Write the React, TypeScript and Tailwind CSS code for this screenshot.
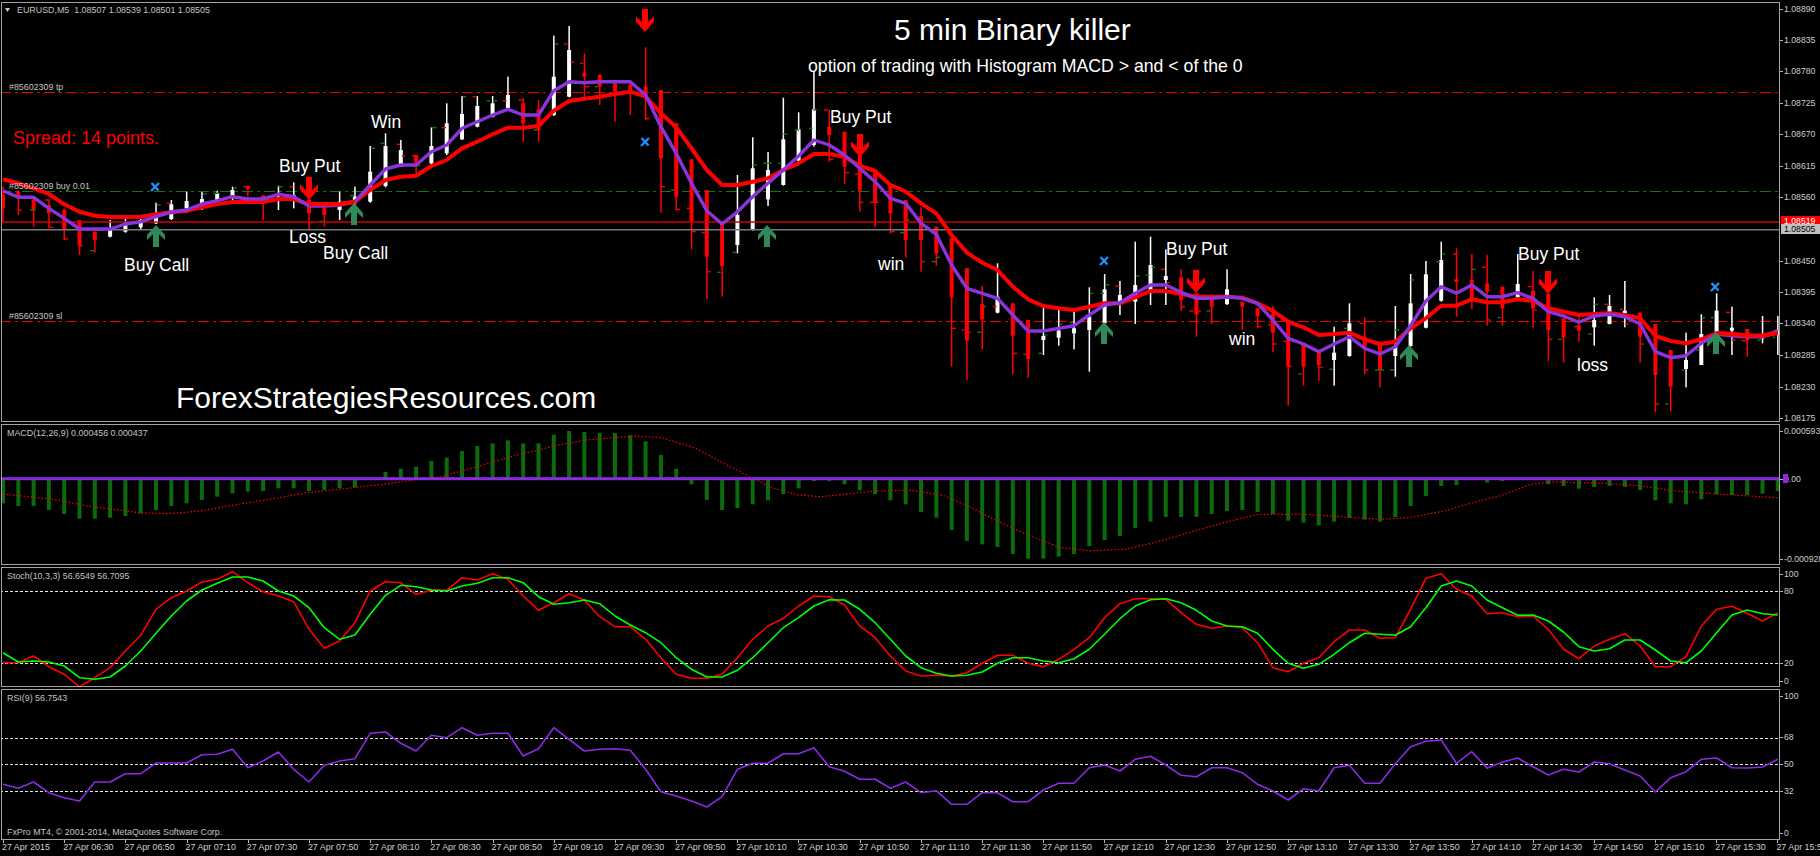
import React from "react";

const bx = (i: number) => 3 + 15.3 * i;
const GRAY = "border-[#a3a3a3]";

// [high, low, bodyTop, bodyBottom, colour] in zoom units
type C = [number, number, number, number, "r" | "w"];
const c1: C[] = [
  [500,605,525,565,"r"],[510,585,515,535,"r"],[530,620,540,570,"r"],[540,625,555,580,"r"],[565,660,570,630,"r"],[600,705,600,675,"r"],[635,698,635,660,"r"],
  [600,652,628,650,"w"],[597,638,612,635,"w"],[597,628,600,622,"w"],[548,612,590,610,"w"],[540,600,553,597,"w"],[515,578,543,565,"w"],[516,570,537,555,"w"],[512,555,520,545,"w"],[500,540,510,528,"w"],
  [500,530,500,505,"r"],[525,600,528,545,"r"],[497,570,530,535,"w"],[487,565,525,530,"w"],[470,628,540,580,"r"],[560,620,565,585,"r"],[515,600,545,570,"w"],[500,560,530,550,"w"],
  [378,548,455,545,"w"],[340,502,378,498,"w"],[360,440,390,440,"w"],[405,465,405,430,"r"],[322,435,378,430,"w"],[250,405,310,400,"w"],
  [228,360,282,358,"w"],[228,322,258,320,"w"],[228,292,250,290,"w"],[170,270,225,265,"w"],[235,365,250,310,"r"],[240,365,268,330,"r"],[47,288,170,285,"w"],[18,232,90,230,"w"],
  [100,235,158,170,"r"],[162,255,165,200,"r"],[190,305,190,215,"r"],[190,285,195,220,"r"],[82,300,200,225,"r"],[210,578,210,415,"r"],[310,572,310,530,"r"],[418,688,418,605,"r"],[510,838,510,710,"r"],[610,830,610,738,"r"],
  [465,700,585,675,"w"],[352,632,445,630,"w"],[396,558,450,538,"w"],[233,497,358,495,"w"],[277,425,328,422,"w"],[155,380,268,375,"w"],
  [270,425,320,345,"r"],[335,492,335,440,"r"],[345,575,400,512,"r"],[450,622,450,548,"r"],[497,640,497,580,"r"],
];
const c2: C[] = [
  [60,233,60,180,"r"],[82,275,108,180,"r"],[140,257,140,220,"r"],[170,560,175,352,"r"],[265,600,265,482,"r"],[318,508,372,418,"r"],[250,400,350,398,"w"],[370,583,370,467,"r"],[420,593,420,537,"r"],
  [380,525,468,480,"w"],[390,497,452,473,"w"],[396,508,445,460,"w"],[322,575,410,450,"w"],[282,430,328,430,"w"],[303,405,345,368,"w"],[185,432,315,365,"w"],[170,375,255,330,"w"],[208,375,288,300,"w"],
  [268,393,292,360,"r"],[340,470,340,403,"r"],[360,432,360,380,"r"],[268,375,328,372,"w"],[365,450,365,380,"r"],[385,445,385,408,"r"],[378,517,400,458,"r"],[420,677,420,558,"r"],[490,617,490,560,"r"],[515,602,515,555,"r"],
  [440,617,518,540,"w"],[370,530,430,528,"w"],
  [412,582,470,500,"r"],[490,622,490,570,"r"],[378,590,498,528,"w"],[282,500,370,498,"w"],[243,445,283,443,"w"],[185,365,240,362,"w"],
  [205,410,300,305,"r"],[222,387,300,360,"r"],[225,437,310,335,"r"],[320,437,320,385,"r"],[222,355,312,352,"w"],[273,443,332,385,"r"],[340,543,342,450,"r"],[415,548,415,473,"r"],[412,485,435,452,"r"],
  [352,497,420,442,"w"],[345,433,378,432,"w"],[303,442,392,400,"w"],[398,548,398,470,"r"],[432,697,432,585,"r"],[510,693,510,620,"r"],[458,622,540,567,"w"],[403,555,462,555,"w"],[340,458,392,455,"w"],[380,525,443,452,"w"],[447,530,447,482,"r"],[408,490,465,475,"w"],[408,525,452,465,"w"],
];

const m1 = (z: number) => 20 + z / 3;
const m2 = (z: number) => 180 + z / 3;
const conv = (f: (z: number) => number, c: C[]) => c.map(([h, l, t, b, k]) => [f(h), f(l), f(t), f(b), k] as const);
const candles = [...conv(m1, c1), ...conv(m2, c2)];

const redMA = [
  ...[478,490,505,522,553,575,587,591,591,590,583,577,572,562,552,546,546,546,537,537,553,553,553,545,510,480,470,467,438,420,385,365,343,323,323,318,272,243,236,230,222,215,230,280,322,385,450,495,495,485,475,450,430,402,402,410,437,453,495].map(m1),
  ...[35,70,100,165,218,248,270,320,358,378,385,390,380,370,370,352,333,333,342,350,350,350,353,370,393,425,442,465,462,458,478,492,485,445,415,377,377,358,367,367,358,362,385,395,405,402,400,405,415,468,483,490,478,460,462,467,467,458].map(m2),
];
const purpleMA = [
  ...[512,532,532,565,595,627,627,627,612,605,590,576,570,552,542,530,537,537,523,530,558,558,555,545,495,447,435,435,395,375,325,305,285,268,285,285,212,185,188,185,185,185,225,320,400,490,572,612,575,530,490,450,408,360,375,405,445,485,535].map(m1),
  ...[70,130,163,255,325,340,355,405,453,453,445,437,405,375,368,340,315,315,337,355,355,350,355,370,420,475,492,515,492,470,505,522,500,437,363,320,340,315,350,350,338,355,395,408,427,408,403,410,432,515,533,527,490,462,467,470,470,452].map(m2),
];

type D = [number, number, number, "r" | "g"];
const d5: D[] = [[55,65,570,"r"],[90,105,570,"g"],[135,150,540,"r"],[148,160,622,"r"],[192,205,657,"r"],[235,248,677,"r"],[270,282,692,"g"],[470,482,555,"g"],[500,512,550,"r"],[610,620,522,"g"],[640,655,520,"g"],[700,710,504,"g"],[730,750,500,"r"],[785,795,527,"r"],[835,848,500,"g"],[868,880,500,"r"],[925,940,608,"r"],[958,970,604,"g"],[1050,1062,527,"g"],[1112,1125,385,"g"],[1142,1155,370,"g"],[1190,1200,373,"r"],[1205,1215,407,"r"],[1235,1250,407,"r"],[1250,1260,437,"g"],[1295,1310,323,"g"],[1325,1338,323,"r"]];
const d6: D[] = [[38,48,230,"g"],[68,80,230,"r"],[110,120,242,"g"],[130,142,242,"g"],[158,170,242,"r"],[205,218,240,"r"],[250,262,330,"g"],[315,325,72,"g"],[342,352,72,"r"],[362,372,126,"r"],[390,400,130,"r"],[405,418,200,"r"],[435,445,200,"g"],[585,598,296,"r"],[632,645,500,"r"],[662,672,510,"g"],[678,690,568,"r"],[710,722,565,"r"],[725,737,635,"r"],[755,767,638,"r"],[770,782,755,"r"],[802,812,757,"g"],[848,860,697,"g"],[908,920,435,"g"],[940,965,430,"g"],[985,995,430,"g"],[1000,1012,342,"g"],[1035,1047,330,"g"],[1078,1088,325,"g"],[1090,1100,270,"g"],[1122,1135,270,"r"],[1137,1150,418,"r"],[1185,1197,458,"r"],[1215,1228,462,"r"],[1230,1240,547,"r"],[1260,1285,547,"r"],[1320,1335,635,"r"]];
const d7: D[] = [[0,12,158,"g"],[20,28,120,"g"],[65,75,245,"r"],[95,108,245,"g"],[110,120,232,"g"],[155,168,445,"r"],[185,198,450,"r"],[200,212,457,"r"],[232,243,457,"g"],[250,258,380,"g"],[278,290,380,"r"],[340,352,520,"r"],[370,384,523,"r"],[415,428,520,"g"],[432,442,465,"g"],[478,488,432,"g"],[508,518,428,"g"],[570,580,340,"g"],[602,612,340,"g"],[615,628,314,"g"],[645,658,318,"r"],[708,718,288,"g"],[737,748,285,"g"],[755,765,262,"g"],[782,795,268,"r"],[800,810,308,"r"],[845,855,380,"r"],[868,880,393,"r"],[890,902,393,"r"],[920,930,393,"g"],[1073,1085,440,"r"],[1105,1118,435,"r"],[1118,1130,492,"r"],[1150,1162,484,"r"],[1165,1175,560,"r"],[1195,1205,582,"g"],[1258,1268,562,"r"],[1288,1298,568,"g"]];
const d8: D[] = [[12,22,445,"g"],[58,70,430,"r"],[75,85,570,"r"],[105,132,570,"g"],[150,162,570,"g"],[165,178,450,"g"],[212,222,300,"g"],[290,300,245,"g"],[305,315,222,"g"],[343,355,300,"r"],[340,350,222,"r"],[395,407,268,"g"],[425,437,262,"r"],[442,452,420,"r"],[472,482,413,"g"],[563,575,320,"r"],[580,590,390,"r"],[627,637,478,"r"],[655,665,478,"g"],[702,715,440,"r"],[745,755,462,"g"],[763,773,373,"g"],[793,805,373,"r"],[840,850,388,"r"],[855,865,432,"r"],[900,912,492,"r"],[945,958,672,"r"],[975,985,672,"g"],[1025,1033,570,"g"],[1068,1078,510,"g"],[1085,1095,413,"g"],[1113,1123,413,"g"],[1158,1170,397,"r"],[1175,1187,480,"r"],[1205,1217,482,"r"],[1252,1262,480,"g"],[1298,1305,472,"g"]];
const dashes = [
  ...d5.map(([a, b, y, k]) => [a / 3, b / 3, m1(y), k] as const),
  ...d6.map(([a, b, y, k]) => [450 + a / 3, 450 + b / 3, m1(y), k] as const),
  ...d7.map(([a, b, y, k]) => [900 + a / 3, 900 + b / 3, m2(y), k] as const),
  ...d8.map(([a, b, y, k]) => [1340 + a / 3, 1340 + b / 3, m2(y), k] as const),
];

const low = (z: number) => 426 + z / 3;
const poly = (vals: number[]) => vals.map((z, i) => `${bx(i).toFixed(1)},${low(z).toFixed(1)}`).join(" ");
const polyMain = (vals: number[], a = 0) => vals.map((y, i) => `${bx(i + a).toFixed(1)},${y.toFixed(1)}`).join(" ");

const macd = [232,240,240,252,264,278,278,275,270,262,252,240,232,222,212,202,197,195,187,187,195,192,187,184,158,138,128,122,105,95,75,60,52,43,52,52,26,15,18,21,21,28,46,87,128,175,222,252,246,235,223,204,187,165,165,175,193,204,223,235,258,275,312,345,355,363,384,398,398,392,384,360,342,330,306,287,273,273,273,264,255,252,258,264,284,290,298,287,276,281,287,273,240,210,180,177,158,170,165,158,158,175,180,188,183,180,183,192,223,232,235,220,205,207,207,203,195];
const signal = [
  [5,205],[40,210],[100,222],[150,240],[240,260],[290,263],[345,255],[400,238],[470,218],[530,200],[600,187],[660,175],[720,160],[760,152],[820,123],[880,92],[960,58],[1010,42],[1090,30],[1140,35],[1200,68],[1250,115],[1295,155],[1330,185],[1375,207],[1415,212],[1470,202],[1510,195],[1568,193],
].map(([x, y]) => `${(x / 1.723).toFixed(1)},${low(y).toFixed(1)}`)
  .concat(
    [[30,200],[60,210],[100,240],[150,285],[200,325],[260,365],[310,374],[370,370],[420,350],[480,320],[540,290],[600,265],[680,265],[740,272],[810,280],[860,275],[920,255],[980,225],[1020,208],[1070,175],[1100,168],[1200,172],[1260,180],[1320,195],[1400,205],[1494,215]].map(([x, y]) => `${(910 + x / 1.723).toFixed(1)},${low(y).toFixed(1)}`),
  )
  .join(" ");

const stochR = [710,710,690,722,745,782,755,725,675,628,550,515,495,468,460,437,470,497,510,527,610,667,645,590,495,467,470,505,493,493,455,462,443,460,510,553,530,503,523,572,602,602,640,695,745,757,757,745,695,640,600,577,540,510,512,537,600,635,690,735,750,748,750,740,712,688,688,712,722,700,670,635,575,533,518,518,520,560,595,607,600,605,650,725,737,712,695,647,612,612,637,635,550,457,443,490,510,563,560,572,570,610,670,698,660,640,623,660,722,722,692,600,550,541,562,585,560];
const stochG = [680,708,705,708,720,755,760,753,720,675,622,570,525,492,472,453,453,465,495,510,545,605,640,627,565,508,478,482,492,495,480,472,455,455,470,512,535,530,522,533,570,597,620,650,695,730,753,753,733,695,650,605,575,540,521,522,550,590,640,690,725,742,750,748,738,712,695,695,705,710,698,670,625,578,540,521,518,530,553,585,600,602,622,670,712,727,715,685,650,622,625,628,602,545,480,465,480,522,545,568,567,585,618,662,675,668,642,642,672,705,710,675,620,567,552,563,567];
const rsi = [1075,1087,1068,1100,1115,1125,1068,1068,1043,1043,1011,1011,1011,986,985,970,1025,1005,978,1030,1068,1018,1005,998,922,918,952,975,928,935,905,928,922,922,990,968,905,940,975,970,968,973,1030,1097,1110,1125,1143,1112,1030,1012,1012,983,983,965,1022,1036,1060,1060,1087,1068,1100,1094,1135,1135,1100,1100,1127,1127,1092,1072,1072,1025,1017,1035,1000,991,1017,1048,1052,1025,1025,1040,1075,1095,1122,1088,1095,1025,1018,1072,1072,1013,962,946,942,1012,977,1027,1008,996,1022,1047,1030,1038,1008,1013,1032,1050,1098,1055,1037,1000,996,1025,1026,1023,1000];

const arrowPts = (h: number) => [[0,0],[9,h*0.45],[9,h*0.68],[3,h*0.42],[3,h],[-3,h],[-3,h*0.42],[-9,h*0.68],[-9,h*0.45]];
const Up = ({ x, y }: { x: number; y: number }) => (
  <polygon points={arrowPts(22).map(([a, b]) => `${x + a},${y + b}`).join(" ")} fill="#2e8b57" />
);
const Down = ({ x, y }: { x: number; y: number }) => (
  <polygon points={arrowPts(23).map(([a, b]) => `${x + a},${y + 23 - b}`).join(" ")} fill="#ff0000" />
);
const Cross = ({ x, y }: { x: number; y: number }) => (
  <path d={`M${x - 3.5} ${y - 4}L${x + 3.5} ${y + 3.5}M${x + 4} ${y - 4}L${x - 4} ${y + 4}`} stroke="#1e90ff" strokeWidth="2.4" fill="none" />
);

const Tag = ({ x, y, top, className, children }: { x: number; y: number; top: number; className: string; children: React.ReactNode }) => (
  <div className={`absolute -translate-y-1/2 whitespace-nowrap ${className}`} style={{ left: x - 2, top: y - top }}>
    {children}
  </div>
);

const Axis = ({ top, labels, children }: { top: number; labels: [number, string][]; children?: React.ReactNode }) => (
  <div className="relative w-[41px] shrink-0 border-l border-[#a3a3a3]">
    {labels.map(([y, t]) => (
      <React.Fragment key={t}>
        <span className="absolute left-0 w-[3px] h-px bg-[#b5b5b5]" style={{ top: y - top }} />
        <span className="absolute left-[4px] -translate-y-1/2 text-[8.7px] leading-none text-[#cccccc] whitespace-nowrap" style={{ top: y - top }}>
          {t}
        </span>
      </React.Fragment>
    ))}
    {children}
  </div>
);

const small = "text-[8.9px] leading-none text-[#c4c4c4]";
const white = "text-[17.5px] leading-none text-white";

const times = ["27 Apr 2015","27 Apr 06:30","27 Apr 06:50","27 Apr 07:10","27 Apr 07:30","27 Apr 07:50","27 Apr 08:10","27 Apr 08:30","27 Apr 08:50","27 Apr 09:10","27 Apr 09:30","27 Apr 09:50","27 Apr 10:10","27 Apr 10:30","27 Apr 10:50","27 Apr 11:10","27 Apr 11:30","27 Apr 11:50","27 Apr 12:10","27 Apr 12:30","27 Apr 12:50","27 Apr 13:10","27 Apr 13:30","27 Apr 13:50","27 Apr 14:10","27 Apr 14:30","27 Apr 14:50","27 Apr 15:10","27 Apr 15:30","27 Apr 15:50"];

export default function App() {
  return (
    <div className="w-[1820px] h-[856px] overflow-hidden bg-black pt-[2px] flex flex-col gap-[2px] [font-family:'Liberation_Sans',sans-serif]">
      {/* main chart: y 2-422 */}
      <div className="flex h-[420px] shrink-0 pl-px">
        <div className={`relative flex-1 border-y border-l ${GRAY}`}>
          <svg className="block w-full h-full" viewBox="2 3 1777 418">
            <polygon points="5,8 10,8 7.5,12" fill="#c8c8c8" />
            <g shapeRendering="crispEdges">
              <line x1="0" x2="1779" y1="92.5" y2="92.5" stroke="#ee0000" strokeWidth="1" strokeDasharray="11 4 3 4" />
              <line x1="0" x2="1779" y1="191.5" y2="191.5" stroke="#0c7a0c" strokeWidth="1" strokeDasharray="11 4 3 4" />
              <line x1="0" x2="1779" y1="321.5" y2="321.5" stroke="#ee0000" strokeWidth="1" strokeDasharray="11 4 3 4" />
            </g>
            {candles.map(([h, l, t, b, k], i) => {
              const col = k === "r" ? "#ff0000" : "#ffffff";
              return (
                <g key={i} fill={col}>
                  <rect x={bx(i) - 0.7} y={h} width={1.5} height={l - h} />
                  <rect x={bx(i) - 2} y={t} width={4} height={Math.max(b - t, 2)} />
                </g>
              );
            })}
            {dashes.map(([a, b, y, k], i) => (
              <rect key={i} x={a} y={y - 0.7} width={b - a} height={1.4} fill={k === "r" ? "#f00000" : "#0f7a0f"} />
            ))}
            <line x1="0" x2="1779" y1="222" y2="222" stroke="#cc0000" strokeWidth="1.6" />
            <line x1="0" x2="1779" y1="229.7" y2="229.7" stroke="#747b86" strokeWidth="1.4" />
            <polyline points={polyMain(redMA)} fill="none" stroke="#ff0000" strokeWidth="4" strokeLinejoin="round" />
            <polyline points={polyMain(purpleMA)} fill="none" stroke="#8a35dc" strokeWidth="3.4" strokeLinejoin="round" />
            <polyline points={polyMain(redMA.slice(20, 24), 20)} fill="none" stroke="#ff0000" strokeWidth="4" strokeLinejoin="round" />
            <polyline points={polyMain(redMA.slice(112), 112)} fill="none" stroke="#ff0000" strokeWidth="4" strokeLinejoin="round" />
            <Up x={156} y={225} />
            <Up x={354} y={203} />
            <Up x={767} y={225} />
            <Up x={1104} y={322} />
            <Up x={1409} y={345} />
            <Up x={1716} y={332} />
            <Down x={645} y={9} />
            <Down x={309} y={177} />
            <Down x={860} y={134} />
            <Down x={1196} y={270} />
            <Down x={1548} y={271} />
            <Cross x={155} y={187} />
            <Cross x={645} y={142} />
            <Cross x={1104} y={261} />
            <Cross x={1715} y={287} />
          </svg>
          <Tag x={17} y={10} top={3} className={small}>EURUSD,M5&nbsp;&nbsp;1.08507 1.08539 1.08501 1.08505</Tag>
          <Tag x={9} y={87} top={3} className={small}>#85602309 tp</Tag>
          <Tag x={9} y={186} top={3} className={small}>#85602309 buy 0.01</Tag>
          <Tag x={9} y={316} top={3} className={small}>#85602309 sl</Tag>
          <Tag x={894} y={30} top={3} className="text-[30px] leading-none text-white">5 min Binary killer</Tag>
          <Tag x={808} y={67} top={3} className="text-[17.7px] leading-none text-white">option of trading with Histogram MACD &gt; and &lt; of the 0</Tag>
          <Tag x={176} y={398} top={3} className="text-[30px] leading-none text-white">ForexStrategiesResources.com</Tag>
          <Tag x={13} y={138} top={3} className="text-[18px] leading-none text-[#ff0000]">Spread: 14 points.</Tag>
          <Tag x={124} y={266} top={3} className={white}>Buy Call</Tag>
          <Tag x={289} y={238} top={3} className={white}>Loss</Tag>
          <Tag x={323} y={254} top={3} className={white}>Buy Call</Tag>
          <Tag x={279} y={167} top={3} className={white}>Buy Put</Tag>
          <Tag x={371} y={123} top={3} className={white}>Win</Tag>
          <Tag x={830} y={118} top={3} className={white}>Buy Put</Tag>
          <Tag x={878} y={265} top={3} className={white}>win</Tag>
          <Tag x={1166} y={250} top={3} className={white}>Buy Put</Tag>
          <Tag x={1229} y={340} top={3} className={white}>win</Tag>
          <Tag x={1518} y={255} top={3} className={white}>Buy Put</Tag>
          <Tag x={1577} y={366} top={3} className={white}>loss</Tag>
        </div>
        <Axis
          top={2}
          labels={[[9,"1.08890"],[40,"1.08835"],[71,"1.08780"],[103,"1.08725"],[134,"1.08670"],[166,"1.08615"],[197,"1.08560"],[260.7,"1.08450"],[292,"1.08395"],[323,"1.08340"],[355,"1.08285"],[386.7,"1.08230"],[418,"1.08175"]]}
        >
          <div className="absolute left-[1px] right-0 top-[214px] h-[8px] overflow-hidden bg-[#ff0000] pl-[3px] text-[8.7px] leading-[10px] text-white">1.08519</div>
          <div className="absolute left-[1px] right-0 top-[222px] h-[10px] bg-[#c0c0c0] pl-[3px] text-[8.7px] leading-[10px] text-black">1.08505</div>
        </Axis>
      </div>

      {/* MACD: y 424-565 */}
      <div className="flex h-[141px] shrink-0 pl-px">
        <div className={`relative flex-1 border-y border-l ${GRAY}`}>
          <svg className="block w-full h-full" viewBox="2 425 1777 139">
            {macd.map((z, i) =>
              z === 158 ? null : (
                <rect key={i} x={bx(i) - 2} y={low(Math.min(z, 158))} width={4} height={Math.abs(z - 158) / 3} fill="#0b6a0b" />
              ),
            )}
            <polyline points={signal} fill="none" stroke="#ff0000" strokeWidth="1.2" strokeDasharray="1.5 2" />
            <rect x="0" y="477.2" width="1779" height="3" fill="#8a2be2" />
          </svg>
          <Tag x={7} y={432.7} top={425} className={small}>MACD(12,26,9) 0.000456 0.000437</Tag>
        </div>
        <Axis top={424} labels={[[431,"0.000593"],[478.5,"0.00"],[558.7,"-0.000928"]]}>
          <div className="absolute left-[3px] top-[50px] w-[5px] h-[9px] bg-[#8a2be2]" />
        </Axis>
      </div>

      {/* Stochastic: y 567-687 */}
      <div className="flex h-[120px] shrink-0 pl-px">
        <div className={`relative flex-1 border-y border-l ${GRAY}`}>
          <svg className="block w-full h-full" viewBox="2 568 1777 118">
            <g shapeRendering="crispEdges">
              <line x1="0" x2="1779" y1="591.5" y2="591.5" stroke="#e8e8e8" strokeWidth="1" strokeDasharray="3 2" />
              <line x1="0" x2="1779" y1="663.5" y2="663.5" stroke="#e8e8e8" strokeWidth="1" strokeDasharray="3 2" />
            </g>
            <polyline points={poly(stochR)} fill="none" stroke="#ff0000" strokeWidth="1.6" strokeLinejoin="round" />
            <polyline points={poly(stochG)} fill="none" stroke="#00ff00" strokeWidth="1.6" strokeLinejoin="round" />
          </svg>
          <Tag x={7} y={576} top={568} className={small}>Stoch(10,3,3) 56.6549 56.7095</Tag>
        </div>
        <Axis top={567} labels={[[573.7,"100"],[591,"80"],[662.7,"20"],[681,"0"]]} />
      </div>

      {/* RSI: y 689-840 */}
      <div className="flex h-[151px] shrink-0 pl-px">
        <div className={`relative flex-1 border-y border-l ${GRAY}`}>
          <svg className="block w-full h-full" viewBox="2 690 1777 149">
            <g shapeRendering="crispEdges">
              <line x1="0" x2="1779" y1="738.5" y2="738.5" stroke="#e8e8e8" strokeWidth="1" strokeDasharray="3 2" />
              <line x1="0" x2="1779" y1="764.5" y2="764.5" stroke="#e8e8e8" strokeWidth="1" strokeDasharray="3 2" />
              <line x1="0" x2="1779" y1="791.5" y2="791.5" stroke="#e8e8e8" strokeWidth="1" strokeDasharray="3 2" />
            </g>
            <polyline points={poly(rsi)} fill="none" stroke="#8a2be2" strokeWidth="1.6" strokeLinejoin="round" />
          </svg>
          <Tag x={7} y={698} top={690} className={small}>RSI(9) 56.7543</Tag>
          <Tag x={7} y={831.7} top={690} className={small}>FxPro MT4, © 2001-2014, MetaQuotes Software Corp.</Tag>
        </div>
        <Axis top={689} labels={[[696,"100"],[737,"68"],[764,"50"],[791,"32"],[832.7,"0"]]} />
      </div>

      {/* time axis */}
      <div className="flex flex-1 -mt-[2px] pl-[3px]">
        {times.map((t) => (
          <div key={t} className="flex w-[61.2px] shrink-0 flex-col">
            <span className="w-px h-[3px] bg-[#b5b5b5]" />
            <span className={`-ml-px whitespace-nowrap ${small} text-[#d0d0d0]`}>{t}</span>
          </div>
        ))}
      </div>
    </div>
  );
}
